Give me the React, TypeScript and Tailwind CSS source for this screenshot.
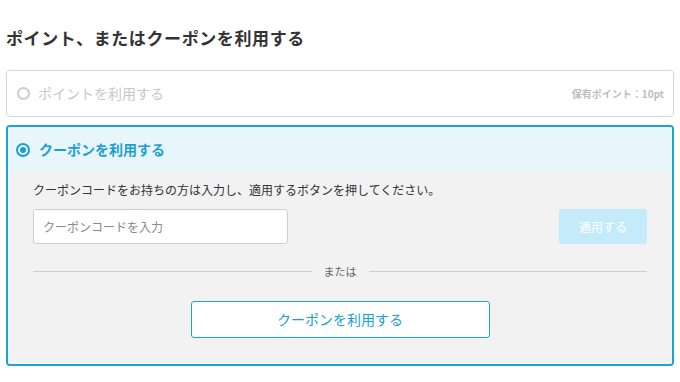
import React from "react";

export default function App() {
  return (
    <div
      className="w-[680px] h-[382px] bg-white px-[6px] pt-[26px] overflow-hidden"
      style={{ fontFamily: '"Noto Sans CJK JP", "Noto Sans", sans-serif' }}
    >
      <h1 className="text-[17px] leading-[24px] font-bold text-[#333333] tracking-[0.6px]">
        ポイント、またはクーポンを利用する
      </h1>

      <div className="mt-[20px] h-[47px] border border-[#d6d6d6] rounded-[4px] flex items-center pl-[10px] pr-[9px]">
        <span className="w-[13px] h-[13px] rounded-full border-2 border-[#cccccc] shrink-0" />
        <span className="ml-[8px] text-[14px] leading-[20px] text-[#c8c8c8] -translate-y-px">ポイントを利用する</span>
        <span className="ml-auto text-[10px] font-bold text-[#bdbdbd]">保有ポイント：10pt</span>
      </div>

      <div className="mt-[8px] border-2 border-[#1aa3d4] rounded-[4px] overflow-hidden">
        <div className="h-[45px] bg-[#e8f6fb] flex items-center pl-[8px]">
          <span className="w-[14px] h-[14px] rounded-full border-2 border-[#1a9fd2] flex items-center justify-center shrink-0">
            <span className="w-[6px] h-[6px] rounded-full bg-[#1a9fd2]" />
          </span>
          <span className="ml-[9px] text-[14px] leading-[20px] font-bold text-[#1a9fd2] -translate-y-px">クーポンを利用する</span>
        </div>
        <div className="bg-[#f2f2f2] px-[25px] pt-[10px] pb-[26px]">
          <p className="text-[12px] leading-[16px] text-[#333333]">
            クーポンコードをお持ちの方は入力し、適用するボタンを押してください。
          </p>
          <div className="mt-[11px] flex items-center justify-between">
            <div className="w-[255px] h-[35px] bg-white border border-[#cfcfcf] rounded-[3px] flex items-center px-[9px]">
              <span className="text-[12px] text-[#8a8a8a]">クーポンコードを入力</span>
            </div>
            <div className="w-[88px] h-[35px] bg-[#c4ebfa] rounded-[3px] flex items-center justify-center">
              <span className="text-[12px] text-white">適用する</span>
            </div>
          </div>
          <div className="mt-[19px] h-[16px] flex items-center">
            <div className="flex-1 h-px bg-[#cfcfcf]" />
            <span className="px-[12px] text-[11px] text-[#666666]">または</span>
            <div className="flex-1 h-px bg-[#cfcfcf]" />
          </div>
          <div className="mt-[22px] flex justify-center">
            <div className="w-[299px] h-[37px] bg-white border border-[#1aa3d4] rounded-[3px] flex items-center justify-center">
              <span className="text-[14px] text-[#1a9fd2]">クーポンを利用する</span>
            </div>
          </div>
        </div>
      </div>
    </div>
  );
}
